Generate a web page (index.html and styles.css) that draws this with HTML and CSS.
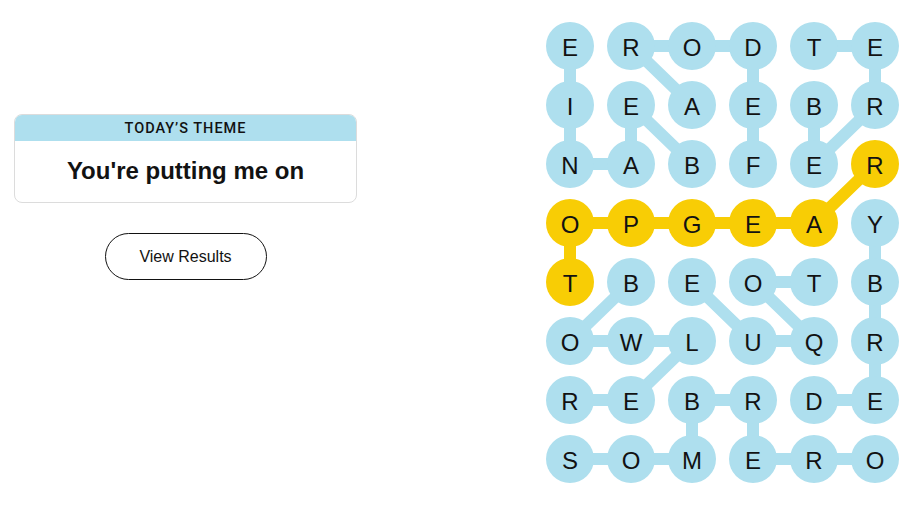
FILE: index.html
```html
<!DOCTYPE html>
<html lang="en">
<head>
<meta charset="utf-8">
<title>Strands</title>
<link rel="stylesheet" href="styles.css">
</head>
<body>
<div class="page">
  <section class="side">
    <div class="theme-card">
      <div class="theme-head">TODAY’S THEME</div>
      <div class="theme-body">You're putting me on</div>
    </div>
    <button class="results-btn">View Results</button>
  </section>

  <section class="board">
    <svg class="links" width="353" height="461" viewBox="0 0 353 461" aria-hidden="true">
      <g class="blue">
        <polyline points="24,24 24,83 24,142 85,142 85,83 146,142"/>
        <polyline points="146,24 85,24 146,83"/>
        <polyline points="146,24 207,24 207,83 207,142"/>
        <polyline points="268,24 329,24 329,83 268,142 268,83"/>
        <polyline points="329,201 329,260 329,319 329,378 268,378"/>
        <polyline points="85,260 24,319 85,319 146,319 85,378 24,378"/>
        <polyline points="146,260 207,319 268,319 207,260 268,260"/>
        <polyline points="24,437 85,437 146,437 146,378 207,378 207,437 268,437 329,437"/>
      </g>
      <g class="gold">
        <polyline points="329,142 268,201 207,201 146,201 85,201 24,201 24,260"/>
      </g>
    </svg>
    <div class="grid">
      <span class="cell">E</span><span class="cell">R</span><span class="cell">O</span><span class="cell">D</span><span class="cell">T</span><span class="cell">E</span>
      <span class="cell">I</span><span class="cell">E</span><span class="cell">A</span><span class="cell">E</span><span class="cell">B</span><span class="cell">R</span>
      <span class="cell">N</span><span class="cell">A</span><span class="cell">B</span><span class="cell">F</span><span class="cell">E</span><span class="cell found">R</span>
      <span class="cell found">O</span><span class="cell found">P</span><span class="cell found">G</span><span class="cell found">E</span><span class="cell found">A</span><span class="cell">Y</span>
      <span class="cell found">T</span><span class="cell">B</span><span class="cell">E</span><span class="cell">O</span><span class="cell">T</span><span class="cell">B</span>
      <span class="cell">O</span><span class="cell">W</span><span class="cell">L</span><span class="cell">U</span><span class="cell">Q</span><span class="cell">R</span>
      <span class="cell">R</span><span class="cell">E</span><span class="cell">B</span><span class="cell">R</span><span class="cell">D</span><span class="cell">E</span>
      <span class="cell">S</span><span class="cell">O</span><span class="cell">M</span><span class="cell">E</span><span class="cell">R</span><span class="cell">O</span>
    </div>
  </section>
</div>
</body>
</html>
```

FILE: styles.css
```css
* { box-sizing: border-box; }

html, body {
  margin: 0;
  padding: 0;
  background: #ffffff;
  color: #121212;
  font-family: "Liberation Sans", Arial, sans-serif;
}

.page {
  display: flex;
  justify-content: space-between;
  width: 912px;
  height: 513px;
  padding: 0 13px 0 14px;
}

.side {
  width: 343px;
  padding-top: 114px;
  display: flex;
  flex-direction: column;
  align-items: center;
}

.theme-card {
  width: 343px;
  border: 1px solid #dcdcdc;
  border-radius: 8px;
  overflow: hidden;
}

.theme-head {
  height: 26px;
  background: #aedfee;
  font-family: Roboto, "Liberation Sans", sans-serif;
  font-weight: 500;
  font-size: 14.5px;
  letter-spacing: 1px;
  line-height: 27px;
  text-align: center;
  color: #121212;
}

.theme-body {
  height: 61px;
  font-weight: 700;
  font-size: 24px;
  line-height: 60px;
  text-align: center;
  color: #121212;
}

.results-btn {
  margin-top: 30px;
  width: 162px;
  height: 47px;
  border: 1px solid #121212;
  border-radius: 24px;
  background: #ffffff;
  color: #121212;
  font-family: "Liberation Sans", Arial, sans-serif;
  font-size: 16px;
  padding: 0;
  cursor: pointer;
}

.board {
  position: relative;
  margin-top: 22px;
  width: 353px;
  height: 461px;
}

.links {
  position: absolute;
  left: 0;
  top: 0;
}

.links polyline {
  fill: none;
  stroke-width: 12;
  stroke-linejoin: round;
}

.links .blue polyline { stroke: #aedfee; }
.links .gold polyline { stroke: #f8cd05; }

.grid {
  position: relative;
  display: grid;
  grid-template-columns: repeat(6, 48px);
  grid-auto-rows: 48px;
  column-gap: 13px;
  row-gap: 11px;
}

.cell {
  width: 48px;
  height: 48px;
  border-radius: 50%;
  background: #aedfee;
  display: flex;
  align-items: center;
  justify-content: center;
  font-size: 24px;
  padding-top: 3px;
  color: #121212;
}

.cell.found { background: #f8cd05; }
```
